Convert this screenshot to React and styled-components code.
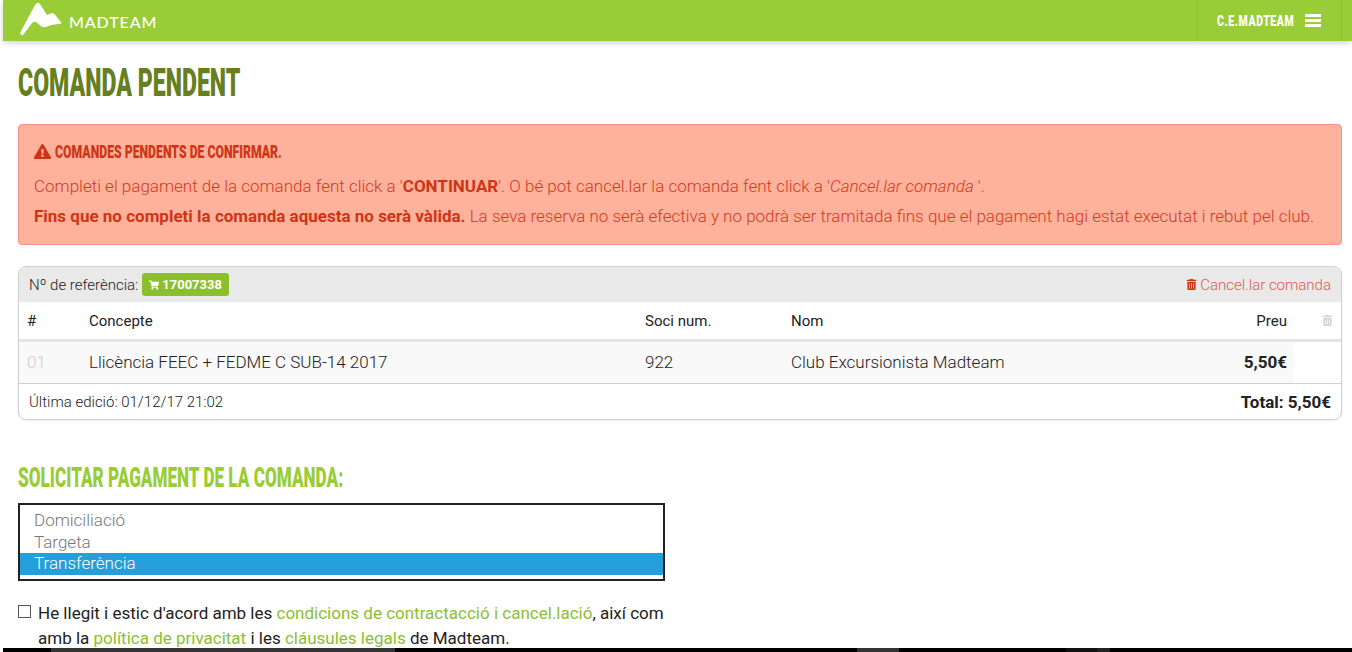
import styled, { createGlobalStyle } from "styled-components";
import { FaExclamationTriangle, FaShoppingCart, FaTrashAlt } from "react-icons/fa";

const GlobalStyle = createGlobalStyle`
  html, body {
    margin: 0;
    padding: 0;
    background: #fff;
    overflow: hidden;
  }
  body {
    font-family: Roboto, "Liberation Sans", sans-serif;
    font-weight: 300;
    color: #222;
  }
`;

const Page = styled.div`
  position: relative;
  width: 1352px;
  height: 652px;
  overflow: hidden;
  padding-left: 3px;
  box-sizing: border-box;
`;

const TopBar = styled.header`
  height: 41px;
  background: #99cd37;
  box-shadow: 0 2px 6px rgba(0, 0, 0, 0.18);
  display: flex;
  justify-content: space-between;
  padding-left: 15px;
  padding-right: 10px;
`;

const Brand = styled.div`
  display: flex;
  align-items: center;
  gap: 7px;
  color: #fff;
`;

const BrandName = styled.span`
  font-family: Lato, sans-serif;
  font-weight: 500;
  font-size: 16px;
  letter-spacing: 0.9px;
  margin-top: 1px;
`;

const UserMenu = styled.div`
  width: 146px;
  box-sizing: border-box;
  padding-left: 20px;
  border-left: 1px solid #90c234;
  border-right: 1px solid #90c234;
  display: flex;
  align-items: center;
  gap: 11px;
  color: #fff;
`;

// no condensed display face is installed, so headings squeeze Roboto
const Squeezed = styled.span`
  display: inline-block;
  width: ${(p) => p.$width}px;
  white-space: nowrap;
  transform: scaleX(${(p) => p.$x});
  transform-origin: left center;
`;

const UserName = styled(Squeezed)`
  font-weight: 900;
  font-size: 14px;
  letter-spacing: 0.8px;
`;

const Content = styled.main`
  padding: 0 10px 0 15px;
`;

const Title = styled.h1`
  margin: 23px 0 0;
  height: 38px;
  font-weight: 900;
  font-size: 38px;
  line-height: 38px;
  color: #667f20;
  text-transform: uppercase;
`;

const Alert = styled.section`
  margin-top: 22px;
  height: 121px;
  box-sizing: border-box;
  padding: 15px;
  background: #ffb29b;
  border: 1px solid #ff9088;
  border-radius: 4px;
  color: #d5391b;
  font-size: 17px;
`;

const AlertTitle = styled.h4`
  margin: 0 0 8px;
  display: flex;
  align-items: center;
  gap: 4px;
  height: 23px;
  font-weight: 900;
  font-size: 19px;
  color: #cf3514;
  text-transform: uppercase;

  svg {
    flex: none;
  }
`;

const AlertLine = styled.p`
  margin: 0;
  height: 30px;
  line-height: 30px;
  white-space: nowrap;

  strong {
    font-weight: 700;
    color: #cf3514;
  }
  em {
    font-style: italic;
  }
`;

const OrderCard = styled.section`
  margin-top: 21px;
  border: 1px solid #d0d0d0;
  border-radius: 8px;
  box-shadow: 0 1px 2px rgba(0, 0, 0, 0.08);
  overflow: hidden;
`;

const CardHead = styled.div`
  height: 35px;
  box-sizing: border-box;
  background: #e9e9e9;
  display: flex;
  align-items: center;
  justify-content: space-between;
  padding: 0 10px;
  font-size: 15px;
`;

const RefLabel = styled.div`
  display: flex;
  align-items: center;
  gap: 4px;
  color: #222;
`;

const RefBadge = styled.span`
  display: inline-flex;
  align-items: center;
  gap: 3px;
  height: 23px;
  padding: 0 7px;
  background: #8bbf30;
  border-radius: 3px;
  color: #fff;
  font-size: 13px;
  font-weight: 700;
`;

const CancelLink = styled.a`
  display: flex;
  align-items: center;
  gap: 3px;
  color: #e2584f;

  svg {
    color: #cf3514;
  }
`;

const Row = styled.div`
  display: grid;
  grid-template-columns: 70px 556px 146px 1fr 100px 48px;
  align-items: center;
  font-size: ${(p) => (p.$head ? "15px" : "17px")};
  height: ${(p) => p.$height}px;
  box-sizing: border-box;
  border-bottom: ${(p) => p.$border};
  font-weight: ${(p) => (p.$head ? 400 : 300)};
`;

const Cell = styled.div`
  align-self: stretch;
  display: flex;
  align-items: center;
  padding-left: ${(p) => (p.$first ? "8px" : "0")};
  padding-right: ${(p) => (p.$right ? "6px" : "0")};
  padding-bottom: ${(p) => (p.$bg ? "1px" : "0")};
  justify-content: ${(p) => (p.$right ? "flex-end" : "flex-start")};
  color: ${(p) => p.$color || "inherit"};
  font-weight: ${(p) => p.$weight || "inherit"};
  background: ${(p) => p.$bg || "transparent"};
`;

const TrashCell = styled.div`
  display: flex;
  justify-content: flex-end;
  padding-right: 8px;
  color: #d3d3d3;
`;

const CardFoot = styled.div`
  height: 35px;
  display: flex;
  align-items: center;
  justify-content: space-between;
  padding: 0 10px;
  font-size: 15px;
`;

const FootTotal = styled.strong`
  font-size: 17px;
  font-weight: 700;
`;

const PayTitle = styled.h3`
  margin: 43px 0 0;
  height: 30px;
  font-weight: 900;
  font-size: 27px;
  line-height: 30px;
  color: #99cd37;
  text-transform: uppercase;
`;

const PayList = styled.div`
  margin-top: 10px;
  width: 647px;
  height: 78px;
  box-sizing: border-box;
  border: 2px solid #222;
  padding-top: 5px;
  font-size: 17px;
  color: #777;
`;

const PayOption = styled.div`
  height: 21.5px;
  line-height: 21.5px;
  padding-left: 14px;
  background: ${(p) => (p.$selected ? "#249fdb" : "transparent")};
  color: ${(p) => (p.$selected ? "#fff" : "inherit")};
`;

const Terms = styled.label`
  display: flex;
  margin-top: 20px;
  width: 650px;
  font-size: 17px;
  line-height: 25px;
  font-weight: 400;
  color: #222;

  a {
    color: #8bbf30;
  }
`;

const TermsBox = styled.span`
  flex: none;
  width: 11px;
  height: 11px;
  margin: 4px 7px 0 0;
  border: 1px solid #555;
  background: #fff;
`;

// strip of the next page section that peeks in at the bottom of the window
const BottomStrip = styled.div`
  position: absolute;
  left: 3px;
  right: 0;
  bottom: 0;
  height: 4px;
  background: #000;
  display: flex;
`;

const StripPiece = styled.span`
  width: ${(p) => p.$w}px;
  margin-left: ${(p) => p.$gap}px;
  background: ${(p) => p.$color};
`;

const Logo = () => (
  <svg width="44" height="41" viewBox="0 0 44 41">
    <path
      fill="#fff"
      d="M2 33 L17 5 Q20 1 22 4 L29 15 L34 13 Q36 13 38 16 L43 22 Q44 24 41 24 L33 25 L28 27 Q25 28 23 26 L18 22 Q16 21 14 23 L5 35 Q3 36 2 33 Z"
    />
  </svg>
);

const MenuIcon = () => (
  <svg width="16" height="13" viewBox="0 0 16 13" fill="#fff">
    <rect width="16" height="3" />
    <rect y="5" width="16" height="3" />
    <rect y="10" width="16" height="3" />
  </svg>
);

export default function App() {
  return (
    <Page>
      <GlobalStyle />
      <TopBar>
        <Brand>
          <Logo />
          <BrandName>MADTEAM</BrandName>
        </Brand>
        <UserMenu>
          <UserName $width={77} $x={0.75}>
            C.E.MADTEAM
          </UserName>
          <MenuIcon />
        </UserMenu>
      </TopBar>
      <Content>
        <Title>
          <Squeezed $x={0.608}>Comanda pendent</Squeezed>
        </Title>
        <Alert>
          <AlertTitle>
            <FaExclamationTriangle size={17} />
            <Squeezed $x={0.644}>Comandes pendents de confirmar.</Squeezed>
          </AlertTitle>
          <AlertLine>
            Completi el pagament de la comanda fent click a '<strong>CONTINUAR</strong>'. O bé pot
            cancel.lar la comanda fent click a '<em>Cancel.lar comanda </em>'.
          </AlertLine>
          <AlertLine>
            <strong>Fins que no completi la comanda aquesta no serà vàlida.</strong> La seva reserva
            no serà efectiva y no podrà ser tramitada fins que el pagament hagi estat executat i
            rebut pel club.
          </AlertLine>
        </Alert>
        <OrderCard>
          <CardHead>
            <RefLabel>
              Nº de referència:
              <RefBadge>
                <FaShoppingCart size={10} />
                17007338
              </RefBadge>
            </RefLabel>
            <CancelLink>
              <FaTrashAlt size={11} />
              Cancel.lar comanda
            </CancelLink>
          </CardHead>
          <Row $height={40} $border="3px solid #e4e4e4" $head>
            <Cell $first>#</Cell>
            <Cell>Concepte</Cell>
            <Cell>Soci num.</Cell>
            <Cell>Nom</Cell>
            <Cell $right>Preu</Cell>
            <TrashCell>
              <FaTrashAlt size={11} />
            </TrashCell>
          </Row>
          <Row $height={42} $border="1px solid #d0d0d0">
            <Cell $first $bg="#f9f9f9" $color="#ccc">
              01
            </Cell>
            <Cell $bg="#f9f9f9">Llicència FEEC + FEDME C SUB-14 2017</Cell>
            <Cell $bg="#f9f9f9">922</Cell>
            <Cell $bg="#f9f9f9">Club Excursionista Madteam</Cell>
            <Cell $bg="#f9f9f9" $right $weight={700}>
              5,50€
            </Cell>
            <div />
          </Row>
          <CardFoot>
            <span>Última edició: 01/12/17 21:02</span>
            <FootTotal>Total: 5,50€</FootTotal>
          </CardFoot>
        </OrderCard>
        <PayTitle>
          <Squeezed $x={0.634}>Solicitar pagament de la comanda:</Squeezed>
        </PayTitle>
        <PayList>
          <PayOption>Domiciliació</PayOption>
          <PayOption>Targeta</PayOption>
          <PayOption $selected>Transferència</PayOption>
        </PayList>
        <Terms>
          <TermsBox />
          <span>
            He llegit i estic d'acord amb les <a>condicions de contractacció i cancel.lació</a>,
            així com amb la <a>política de privacitat</a> i les <a>cláusules legals</a> de Madteam.
          </span>
        </Terms>
      </Content>
      <BottomStrip>
        <StripPiece $gap={48} $w={344} $color="#333" />
        <StripPiece $gap={462} $w={42} $color="#333" />
        <StripPiece $gap={167} $w={31} $color="#111" />
        <StripPiece $gap={0} $w={13} $color="#222" />
      </BottomStrip>
    </Page>
  );
}
